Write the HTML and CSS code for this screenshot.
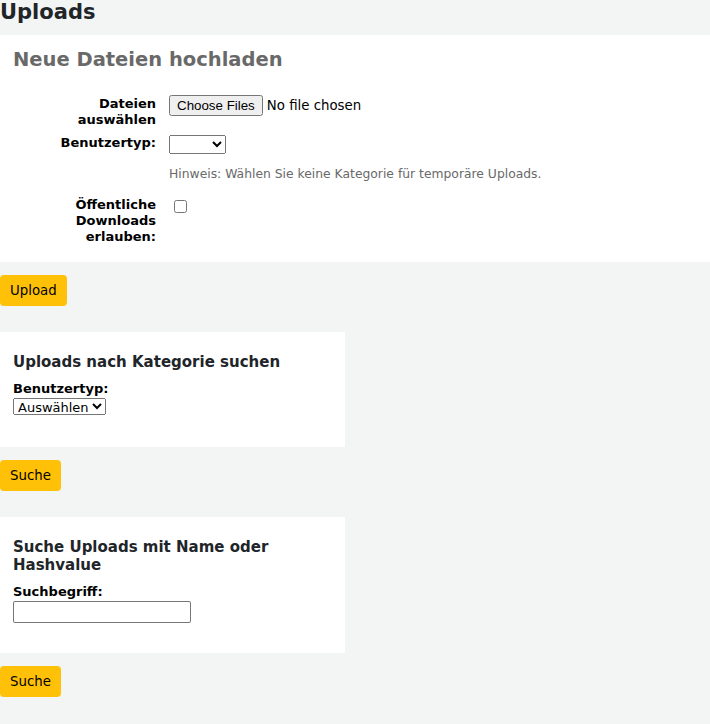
FILE: index.html
```html
<!DOCTYPE html>
<html>
  <head>
    <title>Uploads</title>
    <link rel="stylesheet" href="styles.css">
  </head>
  <body>
    <h1 class="title">Uploads</h1>
    <form class="upload-form">
      <div class="panel">
        <h2 class="legend">Neue Dateien hochladen</h2>
        <div class="row">
          <label class="lbl" for="fileupload">Dateien auswählen</label>
          <div class="ctl"><input id="fileupload" type="file" class="file" multiple /></div>
        </div>
        <div class="row">
          <label class="lbl" for="uploadcategory">Benutzertyp:</label>
          <div class="ctl"><select id="uploadcategory" class="empty-select"><option></option></select></div>
        </div>
        <div class="hint">Hinweis: Wählen Sie keine Kategorie für temporäre Uploads.</div>
        <div class="row last">
          <label class="lbl" for="public">Öffentliche Downloads erlauben:</label>
          <div class="ctl"><input id="public" type="checkbox" class="check" /></div>
        </div>
      </div>
      <button type="button" class="btn">Upload</button>
    </form>

    <form class="search-form">
      <div class="panel small cat-panel">
        <h3 class="sub">Uploads nach Kategorie suchen</h3>
        <label class="top-lbl" for="cat">Benutzertyp:</label>
        <select id="cat" class="cat-select"><option>Auswählen</option></select>
      </div>
      <button type="button" class="btn">Suche</button>
    </form>

    <form class="search-form">
      <div class="panel small">
        <h3 class="sub">Suche Uploads mit Name oder Hashvalue</h3>
        <label class="top-lbl" for="term">Suchbegriff:</label>
        <input id="term" type="text" class="term" />
      </div>
      <button type="button" class="btn">Suche</button>
    </form>
  </body>
</html>
```

FILE: styles.css
```css
body {
  margin: 0;
  background-color: #f3f4f4;
  font-family: "DejaVu Sans", sans-serif;
  font-size: 13px;
  color: #000;
}
.title {
  margin: 0;
  font-size: 21px;
  line-height: 24px;
  padding-bottom: 11px;
  color: #212529;
}
.panel {
  background-color: #fff;
  padding: 13px 13px 17px 13px;
}
.small {
  width: 319px;
  padding-top: 21px;
  padding-bottom: 30px;
}
.cat-panel {
  padding-bottom: 32px;
}
.legend {
  margin: 0 0 23px 0;
  font-size: 19.5px;
  line-height: 24px;
  color: #696969;
}
.row {
  display: grid;
  grid-template-columns: 143px auto;
  column-gap: 13px;
  margin-bottom: 6px;
}
.last {
  margin-bottom: 0;
}
.lbl {
  font-weight: bold;
  text-align: right;
  line-height: 16px;
  padding: 1px 0 0 33px;
}
select,
button,
input {
  font-family: "DejaVu Sans", sans-serif;
  font-size: 13px;
}
.file {
  font-size: 13.33px;
  margin: 0;
}
.empty-select {
  width: 57px;
  height: 19px;
  margin-top: 1px;
}
.hint {
  margin: 13px 0 14px 156px;
  color: #696969;
  font-size: 12.35px;
  line-height: 15px;
}
.check {
  margin: 4px 0 0 5px;
  width: 13px;
  height: 13px;
}
.btn {
  display: block;
  margin: 13px 0 26px 0;
  padding: 6px 10px;
  line-height: 19px;
  font-size: 13.33px;
  background-color: #ffc107;
  border: 0;
  border-radius: 4px;
  color: #000;
}
.sub {
  margin: 0 0 11px 0;
  font-size: 15px;
  line-height: 18px;
  color: #212529;
}
.top-lbl {
  display: block;
  font-weight: bold;
  line-height: 14px;
}
.cat-select {
  display: block;
  height: 17px;
  margin-top: 2px;
}
.term {
  display: block;
  width: 172px;
  height: 18px;
  border: 1px solid #767676;
  border-radius: 2px;
  margin: 2px 0 0 0;
}
```
